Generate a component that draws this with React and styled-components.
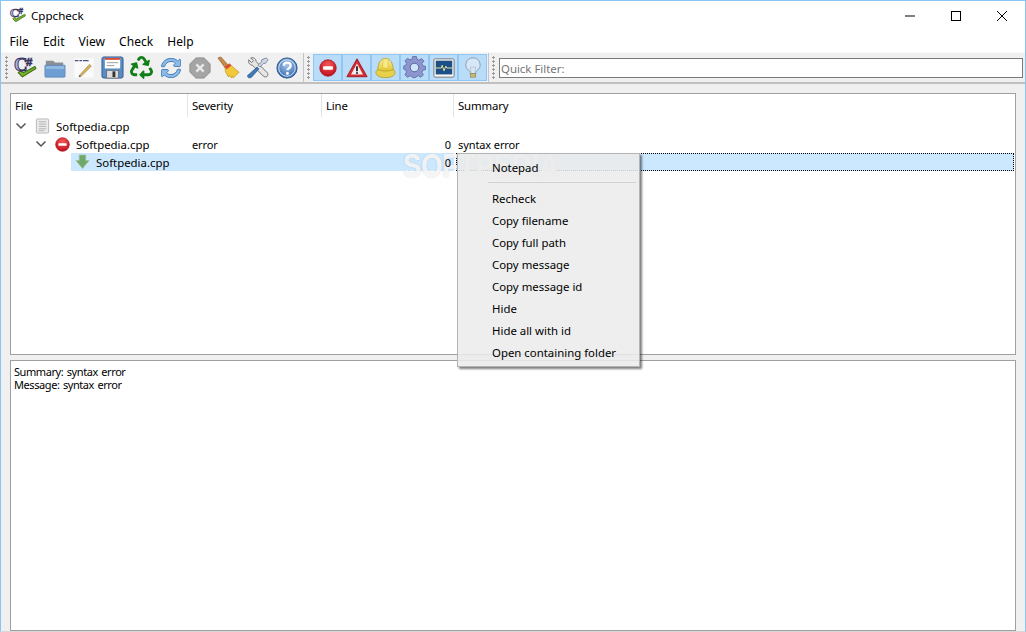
import React from "react";
import styled, { createGlobalStyle } from "styled-components";
import { FaRecycle, FaSyncAlt } from "react-icons/fa";

const Global = createGlobalStyle`
  html, body {
    margin: 0;
    padding: 0;
    background: #f0f0f0;
    overflow: hidden;
  }
  * { box-sizing: border-box; }
`;

const Window = styled.div`
  position: relative;
  width: 1026px;
  height: 632px;
  display: flex;
  flex-direction: column;
  border: 1px solid #8ac4f2;
  border-bottom-color: #d8d8d8;
  background: #f0f0f0;
  color: #000;
  font-family: "Noto Sans", "Liberation Sans", sans-serif;
  font-size: 11.4px;
  overflow: hidden;
`;

const TitleBar = styled.div`
  height: 29px;
  display: flex;
  align-items: center;
  background: #fff;
  padding-left: 8px;
  font-size: 11.6px;
  svg.logo { margin-right: 4px; margin-top: -2px; }
`;

const TitleText = styled.span`
  flex: 1;
`;

const WinButton = styled.div`
  width: 46px;
  height: 29px;
  display: flex;
  align-items: center;
  justify-content: center;
`;

const MenuBar = styled.div`
  height: 22px;
  display: flex;
  align-items: center;
  padding: 0 0 0 1.500px;
  background: #fff;
  font-size: 12px;
  letter-spacing: 0.050px;
`;

const MenuTitle = styled.span`
  padding: 0 7px;
`;

const Toolbar = styled.div`
  height: 32px;
  display: flex;
  align-items: center;
  padding-left: 4px;
  background: #f0f0f0;
  border-top: 1px solid #f7f7f7;
  border-bottom: 2px solid #c0c0c0;
`;

const Handle = styled.div`
  width: 3px;
  height: 24px;
  margin-right: 3px;
  background-image: radial-gradient(circle at 1.500px 1.500px, #9c9c9c 1px, transparent 1.100px);
  background-size: 3px 4px;
`;

const Divider = styled.div`
  width: 1px;
  height: 29px;
  margin: 0 ${(p) => p.$right}px 0 ${(p) => p.$left}px;
  background: #c4c4c4;
`;

const ToolButton = styled.div`
  width: 29px;
  height: 27px;
  display: flex;
  align-items: center;
  justify-content: center;
  background: ${(p) => (p.$on ? "#b9dcf8" : "transparent")};
  border: 1px solid ${(p) => (p.$on ? "#8fc6f4" : "transparent")};
`;

const FilterInput = styled.input`
  width: 524px;
  height: 20px;
  margin-left: 1px;
  padding: 1px 1px 0;
  border: 1px solid #7a7a7a;
  background: #fff;
  font: inherit;
  outline: none;
  &::placeholder { color: #757575; opacity: 1; }
`;

const Content = styled.div`
  flex: 1;
  display: flex;
  flex-direction: column;
  gap: 5px;
  padding: 9px 9px 0;
  min-height: 0;
`;

const Panel = styled.div`
  background: #fff;
  border: 1px solid #a0a0a0;
  height: ${(p) => (p.$h ? `${p.$h}px` : "auto")};
  flex: ${(p) => (p.$h ? "none" : "1")};
`;

const columns = "177px 134px 132px 1fr";

const Header = styled.div`
  display: grid;
  grid-template-columns: ${columns};
  height: 23px;
  letter-spacing: -0.150px;
`;

const HeaderCell = styled.div`
  display: flex;
  align-items: center;
  padding-left: 4px;
  border-right: 1px solid ${(p) => (p.$last ? "transparent" : "#e4e4e4")};
`;

const Row = styled.div`
  display: grid;
  grid-template-columns: ${columns};
  height: 18px;
  align-items: stretch;
`;

const FileCell = styled.div`
  display: flex;
  align-items: center;
  padding-left: ${(p) => p.$depth * 20}px;
`;

const Arrow = styled.div`
  width: 20px;
  flex: none;
  display: flex;
  align-items: center;
  justify-content: center;
`;

const Label = styled.div`
  flex: 1;
  height: 100%;
  display: flex;
  align-items: center;
  gap: 6px;
  padding-left: 4px;
  background: ${(p) => (p.$selected ? "#cce8ff" : "transparent")};
  white-space: nowrap;
`;

const Cell = styled.div`
  display: flex;
  align-items: center;
  padding: 0 3px 0 4px;
  font-size: 11px;
  letter-spacing: -0.100px;
  justify-content: ${(p) => (p.$right ? "flex-end" : "flex-start")};
  background: ${(p) => (p.$selected ? "#cce8ff" : "transparent")};
  span {
    position: relative;
    z-index: 2;
  }
`;

const FocusCell = styled(Cell)`
  margin: 0 1px 0 2px;
  padding-left: 2px;
  outline: 1px dotted #000;
  outline-offset: -1px;
`;

const Details = styled.div`
  padding: 4px 3px;
  line-height: 13px;
  font-size: 11px;
  letter-spacing: -0.420px;
  word-spacing: 1px;
`;

const ContextMenu = styled.div`
  position: absolute;
  z-index: 3;
  left: 456px;
  top: 152px;
  width: 183px;
  padding: 3px 0 2px;
  background: rgba(235, 235, 235, 0.86);
  border: 1px solid #b4b4b4;
  box-shadow: 2px 2px 2px rgba(0, 0, 0, 0.5);
`;

const MenuItem = styled.div`
  height: 22px;
  display: flex;
  align-items: center;
  padding: 0 0 1px 34px;
`;

const MenuSep = styled.div`
  height: 1px;
  margin: 3px 3px 5px 30px;
  background: #d2d2d2;
`;

const Watermark = styled.div`
  position: absolute;
  z-index: 1;
  left: 402px;
  top: 145px;
  font-family: "Liberation Sans", sans-serif;
  font-size: 34px;
  font-weight: 700;
  color: rgba(255, 255, 255, 0.8);
  text-shadow: 0 0 2px rgba(170, 170, 170, 0.55);
  transform: scaleX(0.8);
  transform-origin: left top;
  pointer-events: none;
`;

const CsharpLogo = ({ size = 25, className }) => (
  <svg className={className} width={size} height={size} viewBox="0 0 24 24">
    <path d="M5 17l4 4 13-8-1-2-11 6-3-2z" fill="#7ab32c" stroke="#3c6d10" strokeWidth="1" />
    <text x="1" y="15" fontFamily="Liberation Serif, serif" fontWeight="700" fontSize="18" fill="#b8b4e6" stroke="#34305e" strokeWidth="0.9">C</text>
    <text x="12.500" y="10.500" fontFamily="Liberation Sans, sans-serif" fontWeight="700" fontSize="11" fill="#e8e8f8" stroke="#34305e" strokeWidth="0.7">#</text>
  </svg>
);

const FolderIcon = () => (
  <svg width="22" height="22" viewBox="0 0 24 24">
    <path d="M2 4h8l2 2h9v6H2z" fill="#8b8f96" />
    <path d="M1 9h22v12a1 1 0 0 1-1 1H2a1 1 0 0 1-1-1z" fill="#6f9fd2" stroke="#5b86b4" strokeWidth="0.8" />
    <path d="M2 10h20v3H2z" fill="#93bce4" />
  </svg>
);

const NotesIcon = () => (
  <svg width="22" height="22" viewBox="0 0 24 24">
    <rect x="1" y="1" width="22" height="22" fill="#fbfbfb" stroke="#eee" />
    <path d="M2 4h4M7 4h3M11 4h6" stroke="#46508a" strokeWidth="1.400" />
    <path d="M7 20L18 8l2 2L9 21z" fill="#d6b35c" stroke="#97793a" strokeWidth="0.6" />
    <path d="M7 20l-1 2 3-1z" fill="#444" />
  </svg>
);

const SaveIcon = () => (
  <svg width="23" height="23" viewBox="0 0 24 24">
    <rect x="1" y="1" width="22" height="22" rx="2" fill="#5a8cc4" stroke="#2f5c94" />
    <rect x="4" y="2" width="16" height="11" fill="#fff" />
    <rect x="4" y="2" width="16" height="2" fill="#d84a3c" />
    <path d="M6 7h12M6 10h8" stroke="#9a9a9a" />
    <rect x="6" y="15" width="12" height="8" fill="#ddd" stroke="#555" strokeWidth="0.6" />
    <rect x="12" y="16" width="3" height="6" fill="#333" />
  </svg>
);

const RecycleIcon = () => <FaRecycle size={23} color="#0f7f18" />;

const RefreshIcon = () => (
  <FaSyncAlt size={20} color="#8dbbe8" stroke="#3f78b8" strokeWidth={24} />
);

const StopGreyIcon = () => (
  <svg width="22" height="22" viewBox="0 0 24 24">
    <path d="M7.500 1h9L23 7.500v9L16.500 23h-9L1 16.500v-9z" fill="#a5a5a5" stroke="#8a8a8a" />
    <path d="M8 8l8 8M16 8l-8 8" stroke="#e8e8e8" strokeWidth="2.600" />
  </svg>
);

const BroomIcon = () => (
  <svg width="23" height="23" viewBox="0 0 24 24">
    <path d="M1 2l3-1 8 9-3 3z" fill="#c98a44" stroke="#7a4d1e" strokeWidth="0.6" />
    <path d="M8 11l5-3 3 3 7 6-6 6-1-2-1 2-2-3-1 2-3-5z" fill="#f2c93a" stroke="#b58a16" strokeWidth="0.6" />
    <path d="M8 11l5-3 2 2-5 4z" fill="#d84a3c" />
  </svg>
);

const ToolsIcon = () => (
  <svg width="22" height="22" viewBox="0 0 24 24">
    <path d="M2 3l3 3 2-2-3-3c3-1 6 1 6 4l12 12c1 1 1 3 0 4s-3 1-4 0L6 9C3 9 1 6 2 3z" fill="#e6e6e6" stroke="#5a5a5a" strokeWidth="0.9" />
    <path d="M21 1l2 2-3 4-2 0-4 4-2-2 4-4V3z" fill="#cfd8e4" stroke="#50607a" strokeWidth="0.7" />
    <path d="M11 11l2 2-8 9c-1 1-3 1-4 0s0-3 1-3z" fill="#3f78b8" stroke="#27507e" strokeWidth="0.7" />
  </svg>
);

const HelpIcon = () => (
  <svg width="22" height="22" viewBox="0 0 24 24">
    <defs>
      <radialGradient id="helpFill" cx="50%" cy="35%" r="65%">
        <stop offset="0" stopColor="#a8c6ea" />
        <stop offset="1" stopColor="#2f69ad" />
      </radialGradient>
    </defs>
    <circle cx="12" cy="12" r="11" fill="url(#helpFill)" stroke="#1f4f8c" />
    <circle cx="12" cy="12" r="9" fill="none" stroke="#dfe9f6" />
    <path d="M8.500 9.500c0-4.500 7.500-4.500 7.500 0 0 3-3.500 2.500-3.500 5" fill="none" stroke="#fff" strokeWidth="2.400" />
    <circle cx="12.500" cy="18" r="1.600" fill="#fff" />
  </svg>
);

const ErrorIcon = ({ size = 18 }) => (
  <svg width={size} height={size} viewBox="0 0 22 22">
    <defs>
      <radialGradient id="errFill" cx="50%" cy="30%" r="70%">
        <stop offset="0" stopColor="#f45a5a" />
        <stop offset="1" stopColor="#c00d1c" />
      </radialGradient>
    </defs>
    <circle cx="11" cy="11" r="10" fill="url(#errFill)" stroke="#a8101c" />
    <rect x="5" y="9" width="12" height="4" rx="0.500" fill="#fff" />
  </svg>
);

const WarningIcon = () => (
  <svg width="22" height="22" viewBox="0 0 24 24">
    <path d="M12 2L23 21.500H1z" fill="#d72c34" stroke="#9c1520" strokeLinejoin="round" />
    <path d="M12 7l6.500 12h-13z" fill="#f4eeee" />
    <path d="M12 10v5.500" stroke="#222" strokeWidth="2" />
    <circle cx="12" cy="17.500" r="1.100" fill="#222" />
  </svg>
);

const HelmetIcon = () => (
  <svg width="21" height="22" viewBox="0 0 24 24">
    <defs>
      <linearGradient id="helm" x1="0" y1="0" x2="0" y2="1">
        <stop offset="0" stopColor="#f8f0a8" />
        <stop offset="1" stopColor="#e4c620" />
      </linearGradient>
    </defs>
    <path d="M3 16C3 6 7 1 12 1s9 5 9 15z" fill="url(#helm)" stroke="#a8942a" strokeWidth="0.8" />
    <path d="M9 1.500h6V12H9z" fill="#f6e98a" stroke="#cfb52a" strokeWidth="0.5" />
    <path d="M1 17c0-2 2-3 3-3 4 2 12 2 16 0 1 0 3 1 3 3 0 4-5 6-11 6S1 21 1 17z" fill="#e9d04a" stroke="#a8942a" strokeWidth="0.8" />
  </svg>
);

const GearIcon = () => (
  <svg width="23" height="23" viewBox="0 0 24 24">
    <path
      d="M10 1h4l.6 3 2.400 1 2.600-1.700 2.800 2.800L20 8.700l1 2.400 3 .6v3.600l-3 .6-1 2.400 1.700 2.600-2.800 2.800-2.600-1.700-2.400 1-.6 1H10l-.6-1-2.400-1-2.600 1.700-2.800-2.800L3.300 18l-1-2.400-2-.6V11.400l2-.6 1-2.400L1.600 5.800l2.800-2.800L7 4.700 9.400 3.700z"
      transform="translate(0.5 -0.5) scale(0.96)"
      fill="#8d95cf"
      stroke="#4e6296"
      strokeWidth="0.8"
    />
    <circle cx="12" cy="12" r="4.500" fill="#cfe4f8" stroke="#4e6296" />
  </svg>
);

const MonitorIcon = () => (
  <svg width="22" height="22" viewBox="0 0 24 24">
    <rect x="1" y="2" width="22" height="20" rx="1.500" fill="#f6f6f6" stroke="#707070" />
    <rect x="3" y="4" width="18" height="15" fill="#1c4f86" />
    <path d="M3 12h6l1-3 2 6 2-5 1 2h6" fill="none" stroke="#f4f0a0" strokeWidth="1" />
  </svg>
);

const BulbIcon = () => (
  <svg width="22" height="24" viewBox="0 0 24 24">
    <path d="M12 1a7.500 7.500 0 0 0-4 14c1 1 1 2 1 3h6c0-1 0-2 1-3a7.500 7.500 0 0 0-4-14z" fill="#d6e8f8" stroke="#8498ae" />
    <path d="M10 17l-1-6h6l-1 6" fill="none" stroke="#a8b4c0" strokeWidth="0.7" />
    <rect x="9" y="18" width="6" height="4" fill="#c8b878" stroke="#8b7c46" strokeWidth="0.6" />
  </svg>
);

const DocIcon = () => (
  <svg width="15" height="16" viewBox="0 0 16 16">
    <rect x="1.500" y="0.500" width="13" height="15" rx="1" fill="#ececec" stroke="#b4b4b4" />
    <path d="M4 3.500h8M4 6h8M4 8.500h8M4 11h8M4 13h6" stroke="#b0b0b0" />
  </svg>
);

const DownArrowIcon = () => (
  <svg width="15" height="16" viewBox="0 0 16 16">
    <path d="M4.500 0.500h7v6h3.500L8 15 1 6.500h3.500z" fill="#6fa96a" stroke="#a3c0a2" strokeWidth="0.8" />
  </svg>
);

const Chevron = () => (
  <svg width="12" height="8" viewBox="0 0 12 8">
    <path d="M1.500 1.500L6 6l4.500-4.500" fill="none" stroke="#555" strokeWidth="1.500" />
  </svg>
);

const mainTools = [CsharpLogo, FolderIcon, NotesIcon, SaveIcon, RecycleIcon, RefreshIcon, StopGreyIcon, BroomIcon, ToolsIcon, HelpIcon];
const filterTools = [ErrorIcon, WarningIcon, HelmetIcon, GearIcon, MonitorIcon, BulbIcon];
const menus = ["File", "Edit", "View", "Check", "Help"];
const contextItems = ["Recheck", "Copy filename", "Copy full path", "Copy message", "Copy message id", "Hide", "Hide all with id", "Open containing folder"];

function App() {
  return (
    <Window>
      <Global />
      <TitleBar>
        <CsharpLogo className="logo" size={18} />
        <TitleText>Cppcheck</TitleText>
        <WinButton>
          <svg width="10" height="10" viewBox="0 0 10 10"><path d="M0 5h10" stroke="#000" /></svg>
        </WinButton>
        <WinButton>
          <svg width="10" height="10" viewBox="0 0 10 10"><rect x="0.500" y="0.500" width="9" height="9" fill="none" stroke="#000" /></svg>
        </WinButton>
        <WinButton>
          <svg width="10" height="10" viewBox="0 0 10 10"><path d="M0 0l10 10M10 0L0 10" stroke="#000" /></svg>
        </WinButton>
      </TitleBar>
      <MenuBar>
        {menus.map((m) => (
          <MenuTitle key={m}>{m}</MenuTitle>
        ))}
      </MenuBar>
      <Toolbar>
        <Handle />
        {mainTools.map((Icon, i) => (
          <ToolButton key={i}>
            <Icon />
          </ToolButton>
        ))}
        <Divider $left={2} $right={3} />
        <Handle />
        {filterTools.map((Icon, i) => (
          <ToolButton key={i} $on>
            <Icon />
          </ToolButton>
        ))}
        <Divider $left={1} $right={3} />
        <Handle />
        <FilterInput placeholder="Quick Filter:" />
      </Toolbar>
      <Content>
        <Panel $h={262}>
          <Header>
            <HeaderCell>File</HeaderCell>
            <HeaderCell>Severity</HeaderCell>
            <HeaderCell>Line</HeaderCell>
            <HeaderCell $last>Summary</HeaderCell>
          </Header>
          <Row>
            <FileCell $depth={0}>
              <Arrow><Chevron /></Arrow>
              <Label><DocIcon />Softpedia.cpp</Label>
            </FileCell>
          </Row>
          <Row>
            <FileCell $depth={1}>
              <Arrow><Chevron /></Arrow>
              <Label><ErrorIcon size={15} />Softpedia.cpp</Label>
            </FileCell>
            <Cell>error</Cell>
            <Cell $right>0</Cell>
            <Cell>syntax error</Cell>
          </Row>
          <Row>
            <FileCell $depth={2}>
              <Arrow />
              <Label $selected><DownArrowIcon />Softpedia.cpp</Label>
            </FileCell>
            <Cell $selected />
            <Cell $selected $right><span>0</span></Cell>
            <FocusCell $selected />
          </Row>
        </Panel>
        <Panel>
          <Details>
            <div>Summary: syntax error</div>
            <div>Message: syntax error</div>
          </Details>
        </Panel>
      </Content>
      <Watermark aria-hidden="true">SOFTPEDIA</Watermark>
      <ContextMenu>
        <MenuItem>Notepad</MenuItem>
        <MenuSep />
        {contextItems.map((c) => (
          <MenuItem key={c}>{c}</MenuItem>
        ))}
      </ContextMenu>
    </Window>
  );
}

export default App;
